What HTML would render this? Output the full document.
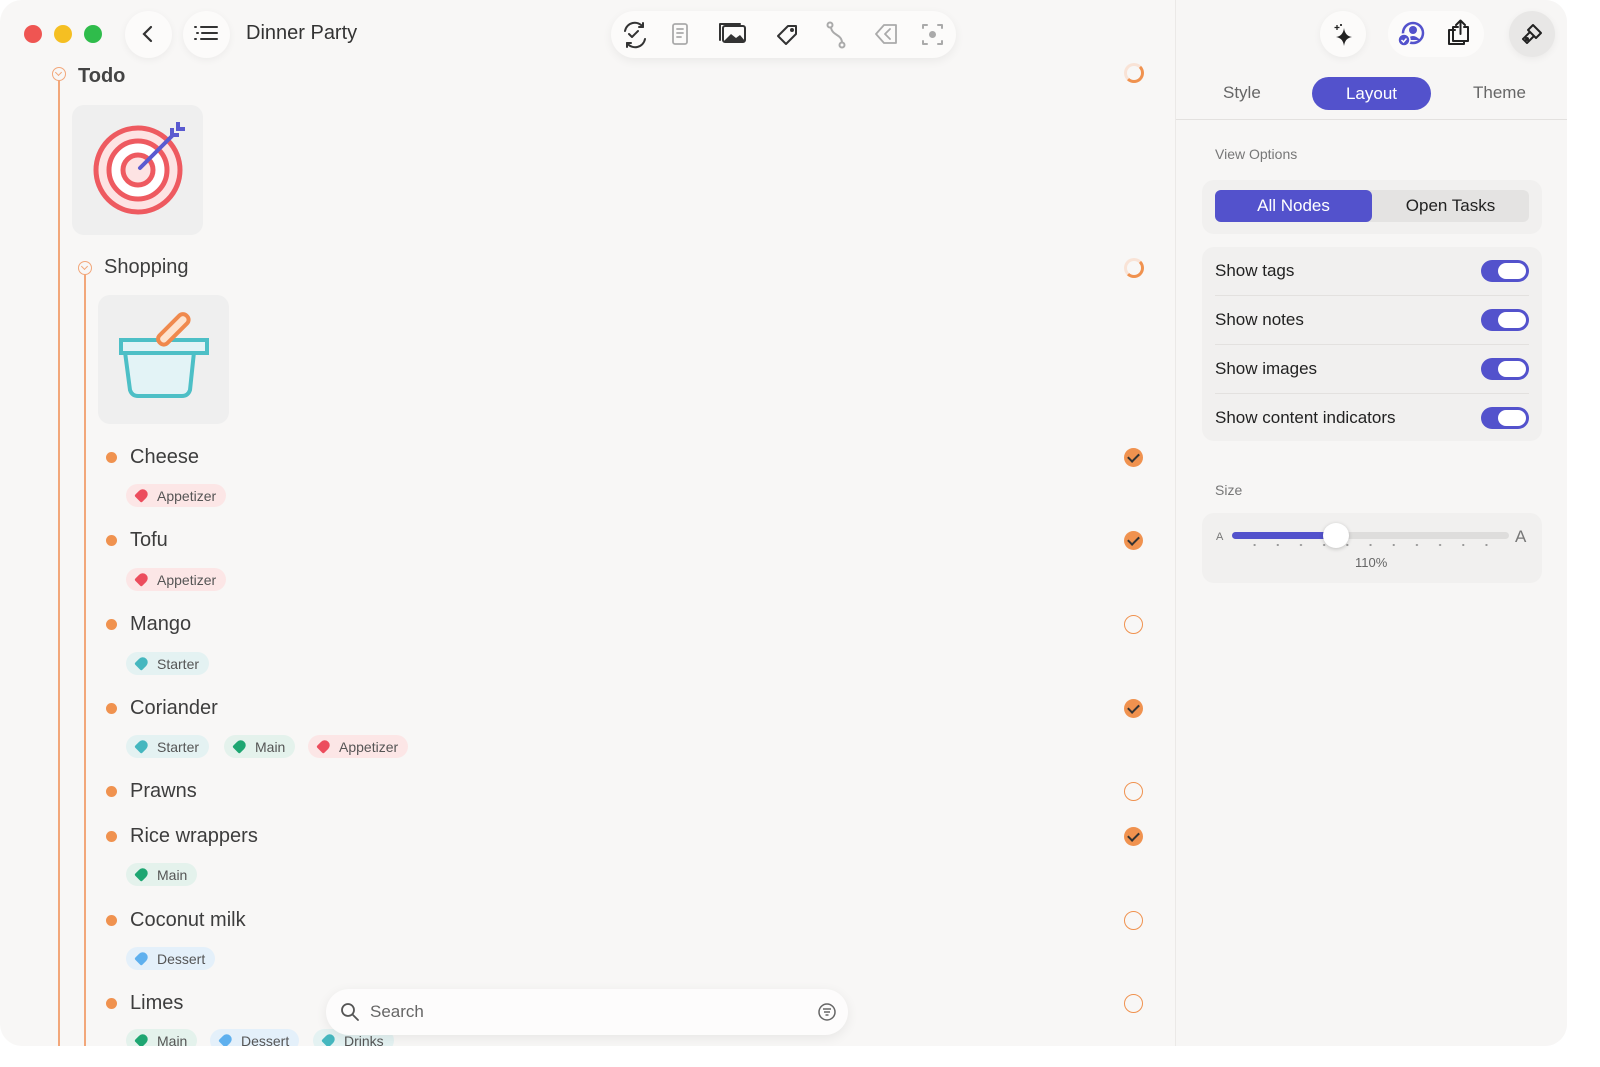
<!DOCTYPE html>
<html><head><meta charset="utf-8"><style>
*{box-sizing:border-box;margin:0;padding:0}
body{width:1600px;height:1067px;background:#fff;font-family:"Liberation Sans",sans-serif;position:relative;overflow:hidden}
.win{position:absolute;left:0;top:0;width:1567px;height:1046px;border-radius:22px;overflow:hidden;background:#f8f7f6}
.side{position:absolute;left:1175px;top:0;width:392px;height:1046px;background:#f7f6f5;border-left:1px solid #ebe9e7}
.a{position:absolute}
.t{position:absolute;font-size:20px;color:#3d3d3d}
.dot{position:absolute;width:11px;height:11px;border-radius:50%;background:#f0924f}
.tag{position:absolute;height:23px;border-radius:12px;font-size:14px;color:#555;padding:4px 10px 0 31px}
.tag i{position:absolute;left:10px;top:6px;width:12px;height:10px;border-radius:2px 6px 6px 2px;transform:rotate(-45deg)}
.r{background:#fce6e6}.r i{background:#ec4d5d}
.g{background:#e4f2ec}.g i{background:#1ea672}
.b{background:#e4f0fa}.b i{background:#5fb0ee}
.c{background:#e4f2f2}.c i{background:#45b7bf}
.ck{position:absolute;left:1124px;width:19px;height:19px;border-radius:50%}
.on{background:#f0924f}
.off{border:1.5px solid #f0924f}
.on:after{content:"";position:absolute;left:6px;top:3px;width:5px;height:9px;border:solid #333;border-width:0 2px 2px 0;transform:rotate(45deg)}
.tog{position:absolute;left:1481px;width:48px;height:22px;border-radius:11px;background:#5352cc}
.tog:after{content:"";position:absolute;right:3px;top:3px;width:28px;height:16px;border-radius:8px;background:#fff}
.cb{position:absolute;width:46px;height:46px;border-radius:50%;background:#fcfbfa;box-shadow:0 2px 8px rgba(0,0,0,.05)}
.col{position:absolute;width:14px;height:14px;border-radius:50%;border:1.5px solid #f2a77a;background:#f8f7f6}
.col:after{content:"";position:absolute;left:3px;top:1.5px;width:4px;height:4px;border:solid #f2a77a;border-width:0 1.5px 1.5px 0;transform:rotate(45deg)}
</style></head><body>
<div class="win">
<div class="a" style="left:24px;top:25px;width:18px;height:18px;border-radius:50%;background:#ef5552"></div>
<div class="a" style="left:54px;top:25px;width:18px;height:18px;border-radius:50%;background:#f5bf22"></div>
<div class="a" style="left:84px;top:25px;width:18px;height:18px;border-radius:50%;background:#2fbc4b"></div>
<div class="cb" style="left:125px;top:11px;width:47px;height:47px"></div>
<svg class="a" style="left:138px;top:24px" width="20" height="20"><path d="M13 3 L6 10 L13 17" fill="none" stroke="#333" stroke-width="2.2" stroke-linecap="round"/></svg>
<div class="cb" style="left:183px;top:11px;width:47px;height:47px"></div>
<svg class="a" style="left:193px;top:25px" width="28" height="18"><g stroke="#333" stroke-width="2" stroke-linecap="round"><path d="M2 2h1M8 2h16M4 8h1M9 8h15M2 14h1M8 14h16"/></g></svg>
<div class="a" style="left:246px;top:22px;font-size:20px;color:#333">Dinner Party</div>
<div class="a" style="left:611px;top:11px;width:345px;height:47px;border-radius:24px;background:#fcfbfa;box-shadow:0 3px 10px rgba(0,0,0,.06)"></div>
<svg class="a" style="left:620px;top:18px" width="330" height="34" fill="none" stroke-linecap="round" stroke-linejoin="round">
<g stroke="#333" stroke-width="2"><path d="M5 13a10 10 0 0 1 18-4M25 21a10 10 0 0 1-18 4"/><path d="M9 16l3 3 6-6"/><path d="M23 5v4h-4M7 29v-4h4"/></g>
<g stroke="#aaa" stroke-width="1.8"><rect x="53" y="6" width="14" height="20" rx="2"/><path d="M57 11h6M57 15h6M57 19h4"/></g>
<g stroke="#333" stroke-width="2"><rect x="103" y="8" width="22" height="16" rx="2"/><path d="M100 22V6h20"/></g><path d="M104 23l7-7 5 4 4-3 5 6z" fill="#333"/>
<g stroke="#333" stroke-width="2"><path d="M158 18l10-10h8v8l-10 10z"/><circle cx="172" cy="12" r="1"/></g>
<g stroke="#aaa" stroke-width="2"><circle cx="210" cy="7" r="2.5"/><circle cx="222" cy="27" r="2.5"/><path d="M211 10c2 8 10 6 11 14"/></g>
<g stroke="#aaa" stroke-width="1.8"><path d="M256 16l8-9h12v18h-12z"/><path d="M270 11l-5 5 5 5"/></g>
<g stroke="#aaa" stroke-width="2"><path d="M303 10V7h4M318 7h4v3M322 23v3h-4M307 26h-4v-3"/><circle cx="312.5" cy="16.5" r="2.5" fill="#aaa"/></g>
</svg>
<div class="a" style="left:58px;top:80px;width:2px;height:970px;background:#f2a77a"></div>
<div class="a" style="left:84px;top:272px;width:2px;height:780px;background:#f2a77a"></div>
<div class="col" style="left:52px;top:67px"></div>
<div class="col" style="left:78px;top:261px"></div>
<div class="t" style="left:78px;top:65px;font-weight:bold;color:#444">Todo</div>
<div class="a" style="left:72px;top:105px;width:131px;height:130px;border-radius:12px;background:#efefef"></div>
<svg class="a" style="left:90px;top:115px" width="100" height="105" fill="none">
<circle cx="48" cy="55" r="42" fill="#fde3e3" stroke="#ee5a60" stroke-width="5"/>
<circle cx="48" cy="55" r="29" fill="#fff" stroke="#ee5a60" stroke-width="5"/>
<circle cx="48" cy="55" r="15" fill="#fde3e3" stroke="#ee5a60" stroke-width="5"/>
<path d="M50 53L82 21" stroke="#5a5ad0" stroke-width="4" stroke-linecap="round"/>
<path d="M82 13v7h7M88 7v7h7" stroke="#5a5ad0" stroke-width="4"/>
</svg>
<div class="t" style="left:104px;top:256px">Shopping</div>
<div class="a" style="left:98px;top:295px;width:131px;height:129px;border-radius:12px;background:#efefef"></div>
<svg class="a" style="left:115px;top:310px" width="100" height="95" fill="none">
<path d="M10 42l5 38q2 6 8 6h44q6 0 8-6l4-38z" fill="#e3f3f6" stroke="#4dbfc6" stroke-width="4" stroke-linejoin="round"/>
<rect x="6" y="30" width="86" height="13" fill="#e3f3f6" stroke="#4dbfc6" stroke-width="4"/>
<rect x="53" y="0" width="11" height="38" rx="5" transform="rotate(45 58 19)" fill="#fde3cf" stroke="#f0894d" stroke-width="4"/>
</svg>
<div class="ck" style="left:1124px;top:63px;width:20px;height:20px;border:3px solid #f9e3d6;border-right-color:#f0924f;border-bottom-color:#f0924f"></div>
<div class="ck" style="left:1124px;top:258px;width:20px;height:20px;border:3px solid #f9e3d6;border-right-color:#f0924f;border-bottom-color:#f0924f"></div>

<div class="dot" style="left:106px;top:452px"></div><div class="t" style="left:130px;top:446px">Cheese</div>
<div class="tag r" style="left:126px;top:484px"><i></i>Appetizer</div><div class="ck on" style="top:448px"></div>
<div class="dot" style="left:106px;top:535px"></div><div class="t" style="left:130px;top:529px">Tofu</div>
<div class="tag r" style="left:126px;top:568px"><i></i>Appetizer</div><div class="ck on" style="top:531px"></div>
<div class="dot" style="left:106px;top:619px"></div><div class="t" style="left:130px;top:613px">Mango</div>
<div class="tag c" style="left:126px;top:652px"><i></i>Starter</div><div class="ck off" style="top:615px"></div>
<div class="dot" style="left:106px;top:703px"></div><div class="t" style="left:130px;top:697px">Coriander</div>
<div class="tag c" style="left:126px;top:735px"><i></i>Starter</div><div class="tag g" style="left:224px;top:735px"><i></i>Main</div><div class="tag r" style="left:308px;top:735px"><i></i>Appetizer</div><div class="ck on" style="top:699px"></div>
<div class="dot" style="left:106px;top:786px"></div><div class="t" style="left:130px;top:780px">Prawns</div><div class="ck off" style="top:782px"></div>
<div class="dot" style="left:106px;top:831px"></div><div class="t" style="left:130px;top:825px">Rice wrappers</div>
<div class="tag g" style="left:126px;top:863px"><i></i>Main</div><div class="ck on" style="top:827px"></div>
<div class="dot" style="left:106px;top:915px"></div><div class="t" style="left:130px;top:909px">Coconut milk</div>
<div class="tag b" style="left:126px;top:947px"><i></i>Dessert</div><div class="ck off" style="top:911px"></div>
<div class="dot" style="left:106px;top:998px"></div><div class="t" style="left:130px;top:992px">Limes</div><div class="ck off" style="top:994px"></div>
<div class="tag g" style="left:126px;top:1029px"><i></i>Main</div><div class="tag b" style="left:210px;top:1029px"><i></i>Dessert</div><div class="tag c" style="left:313px;top:1029px"><i></i>Drinks</div>
<div class="a" style="left:326px;top:989px;width:522px;height:46px;border-radius:23px;background:#fdfcfc;box-shadow:0 3px 12px rgba(0,0,0,.07)"></div>
<svg class="a" style="left:340px;top:1002px" width="20" height="20" fill="none" stroke="#555" stroke-width="1.8"><circle cx="8" cy="8" r="6"/><path d="M12.5 12.5L18 18" stroke-linecap="round"/></svg>
<div class="a" style="left:370px;top:1002px;font-size:17px;color:#666">Search</div>
<svg class="a" style="left:817px;top:1002px" width="20" height="20" fill="none" stroke="#666" stroke-width="1.5"><circle cx="10" cy="10" r="8"/><path d="M6 7h8M7 10h6M8.5 13h3"/></svg>

<div class="side"></div>
<div class="cb" style="left:1320px;top:11px"></div>
<svg class="a" style="left:1331px;top:22px" width="26" height="26"><path d="M13 6q1 8 8 9q-7 1-8 9q-1-8-8-9q7-1 8-9z" fill="#222"/><path d="M6 3v5M3.5 5.5h5M10 2v2M9 3h2" stroke="#222" stroke-width="1.3"/></svg>
<div class="a" style="left:1388px;top:11px;width:96px;height:46px;border-radius:23px;background:#fcfbfa"></div>
<svg class="a" style="left:1396px;top:20px" width="30" height="28" fill="none"><circle cx="17" cy="13" r="10" stroke="#5352cc" stroke-width="2.5"/><circle cx="17" cy="10" r="4" fill="#5352cc"/><path d="M10 20q7-8 14 0" fill="#5352cc"/><circle cx="8" cy="20" r="6" fill="#5352cc" stroke="#fcfbfa" stroke-width="1.5"/><path d="M5.5 20l2 2 3-3.5" stroke="#fff" stroke-width="1.5"/></svg>
<svg class="a" style="left:1446px;top:19px" width="28" height="32" fill="none" stroke="#222" stroke-width="2" stroke-linejoin="round" stroke-linecap="round"><path d="M9 11H3v14h15v-3"/><path d="M12 8H7v14h15V8h-4M14.5 15V2M10 6l4.5-4.5L19 6"/></svg>
<div class="cb" style="left:1509px;top:11px;background:#e8e7e6"></div>
<svg class="a" style="left:1519px;top:21px" width="26" height="26" fill="none" stroke="#222" stroke-width="2" stroke-linejoin="round"><path d="M14 4l8 8-5 5-8-8z"/><path d="M11 11l-7 7 4 4 7-7"/><circle cx="8" cy="18" r="1"/></svg>
<div class="a" style="left:1223px;top:83px;font-size:17px;color:#666">Style</div>
<div class="a" style="left:1312px;top:77px;width:119px;height:33px;border-radius:17px;background:#5352cc;color:#fff;font-size:17px;text-align:center;line-height:33px">Layout</div>
<div class="a" style="left:1473px;top:83px;font-size:17px;color:#666">Theme</div>
<div class="a" style="left:1176px;top:119px;width:391px;height:1px;background:#e3e1df"></div>
<div class="a" style="left:1215px;top:146px;font-size:14px;color:#777">View Options</div>
<div class="a" style="left:1202px;top:180px;width:340px;height:54px;border-radius:12px;background:#f1f0ef"></div>
<div class="a" style="left:1215px;top:190px;width:314px;height:32px;border-radius:6px;background:#e4e3e2"></div>
<div class="a" style="left:1215px;top:190px;width:157px;height:32px;border-radius:6px;background:#5352cc;color:#fff;font-size:17px;text-align:center;line-height:32px">All Nodes</div>
<div class="a" style="left:1372px;top:190px;width:157px;height:32px;font-size:17px;color:#222;text-align:center;line-height:32px">Open Tasks</div>
<div class="a" style="left:1202px;top:247px;width:340px;height:194px;border-radius:12px;background:#f1f0ef"></div>
<div class="a" style="left:1215px;top:295px;width:314px;height:1px;background:#e3e1df"></div>
<div class="a" style="left:1215px;top:344px;width:314px;height:1px;background:#e3e1df"></div>
<div class="a" style="left:1215px;top:393px;width:314px;height:1px;background:#e3e1df"></div>
<div class="a" style="left:1215px;top:261px;font-size:17px;color:#222">Show tags</div><div class="tog" style="top:260px"></div>
<div class="a" style="left:1215px;top:310px;font-size:17px;color:#222">Show notes</div><div class="tog" style="top:309px"></div>
<div class="a" style="left:1215px;top:359px;font-size:17px;color:#222">Show images</div><div class="tog" style="top:358px"></div>
<div class="a" style="left:1215px;top:408px;font-size:17px;color:#222">Show content indicators</div><div class="tog" style="top:407px"></div>
<div class="a" style="left:1215px;top:482px;font-size:14px;color:#777">Size</div>
<div class="a" style="left:1202px;top:513px;width:340px;height:70px;border-radius:12px;background:#f1f0ef"></div>
<div class="a" style="left:1216px;top:531px;font-size:11px;color:#777">A</div>
<div class="a" style="left:1515px;top:527px;font-size:17px;color:#777">A</div>
<div class="a" style="left:1232px;top:532px;width:277px;height:7px;border-radius:4px;background:#dedddc"></div>
<div class="a" style="left:1232px;top:532px;width:104px;height:7px;border-radius:4px;background:#5352cc"></div>
<div class="a" style="left:1243px;top:544px;width:260px;height:2px;background:radial-gradient(circle,#999 1px,transparent 1.2px) 0 0/23.2px 2px"></div>
<div class="a" style="left:1323px;top:523px;width:26px;height:25px;border-radius:50%;background:#fff;box-shadow:0 1px 4px rgba(0,0,0,.2)"></div>
<div class="a" style="left:1355px;top:555px;font-size:13px;color:#666">110%</div>
</div>
</body></html>
